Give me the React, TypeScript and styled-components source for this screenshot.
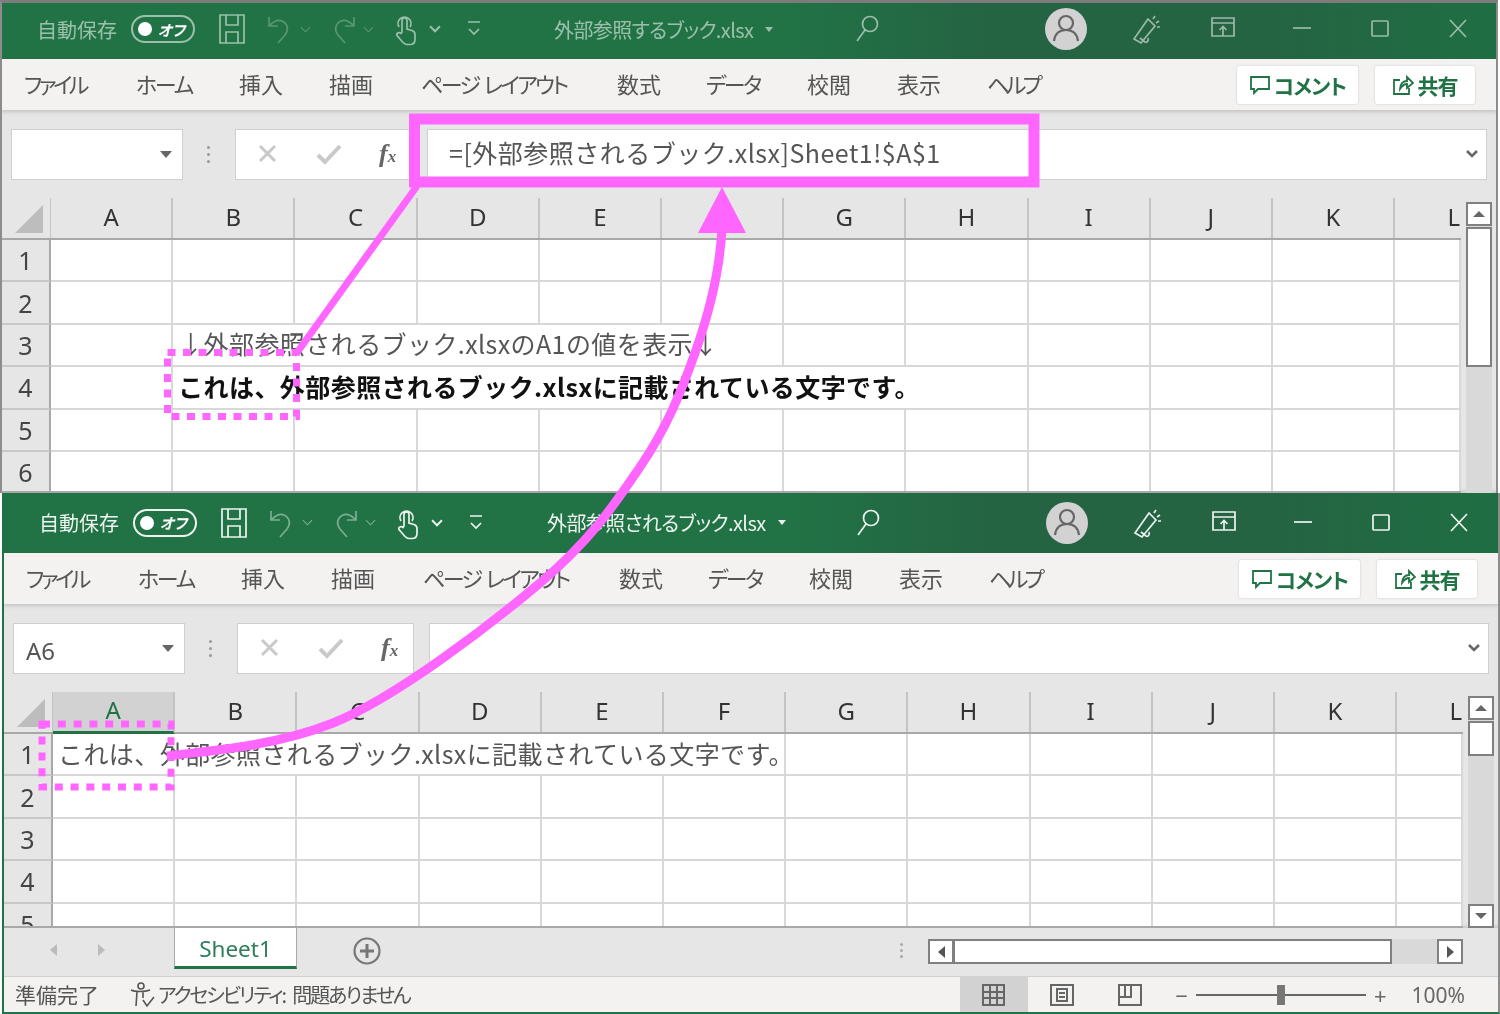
import React from 'react';
import styled, { createGlobalStyle } from 'styled-components';

const FONT = '"Noto Sans CJK JP", "Noto Sans", sans-serif';
const PINK = '#ff66ff';
const GREEN = '#217346';

const GlobalStyle = createGlobalStyle`
  html, body { margin: 0; padding: 0; background: #fff; overflow: hidden; }
  body { font-family: ${FONT}; font-feature-settings: "palt"; }
`;

const COLUMNS = ['A', 'B', 'C', 'D', 'E', 'F', 'G', 'H', 'I', 'J', 'K', 'L'];
const MENUS = [
  { label: 'ファイル', width: 64, gap: 0, tight: -3.6 },
  { label: 'ホーム', width: 57, gap: 48, tight: -2.3 },
  { label: '挿入', width: 44, gap: 46, tight: 0 },
  { label: '描画', width: 44, gap: 46, tight: 0 },
  { label: 'ページ レイアウト', width: 146, gap: 48, tight: -2.6 },
  { label: '数式', width: 44, gap: 50, tight: 0 },
  { label: 'データ', width: 55, gap: 45, tight: -2.6 },
  { label: '校閲', width: 44, gap: 46, tight: 0 },
  { label: '表示', width: 44, gap: 46, tight: 0 },
  { label: 'ヘルプ', width: 55, gap: 46, tight: -3.6 },
];

type CellData = { col: number; span: number; text: string; bold?: boolean };
type RowData = { label: number; height?: number; cell?: CellData };

const TitleIcon: React.FC<{ w: number; children: React.ReactNode; box?: string }> = ({ w, children, box }) => (
  <IconSvg width={w} height={34} viewBox={box || `0 0 ${w} 34`} fill="none" stroke="currentColor" strokeWidth={1.7}>
    {children}
  </IconSvg>
);

const Window: React.FC<{
  active?: boolean;
  title: string;
  titleGap: number;
  titleWidth: number;
  nameBox?: string;
  formula?: string;
  rows: RowData[];
  thumb: number;
  selected?: boolean;
  footer?: boolean;
}> = ({ active, title, titleGap, titleWidth, nameBox, formula, rows, thumb, selected, footer }) => (
  <WindowFrame $footer={footer}>
    <TitleBar $active={active}>
      <AutoSave>自動保存</AutoSave>
      <Toggle>
        <ToggleDot />
        <ToggleText>オフ</ToggleText>
      </Toggle>
      <Spot $ml={22}>
        <TitleIcon w={30}>
          <path d="M3 3h24v28H3zM9 3v10h12V3M9 31V20h12v11" />
        </TitleIcon>
      </Spot>
      <Spot $ml={19} $dim>
        <TitleIcon w={28}>
          <path d="M3 5v9h9M3 14c5-5 9-7 13-5 6 3 7 9 3 14l-7 8" />
        </TitleIcon>
      </Spot>
      <Spot $ml={6} $dim>
        <Chevron />
      </Spot>
      <Spot $ml={18} $dim>
        <TitleIcon w={28}>
          <path d="M25 5v9h-9M25 14c-5-5-9-7-13-5-6 3-7 9-3 14l7 8" />
        </TitleIcon>
      </Spot>
      <Spot $ml={6} $dim>
        <Chevron />
      </Spot>
      <Spot $ml={20}>
        <TitleIcon w={22}>
          <path d="M5 15a6.500 6.500 0 1 1 11 0M8 20V8.500a2.400 2.400 0 0 1 5 0V17l5 1.500c2 .6 3 2 3 4v5c0 3-2 5-5 5h-3c-2 0-3-1-4-2l-6-7c-1-2 2-4 4-2z" />
        </TitleIcon>
      </Spot>
      <Spot $ml={13}>
        <Chevron $strong />
      </Spot>
      <Spot $ml={25}>
        <TitleIcon w={16}>
          <path d="M2 10h12M3 17l5 5 5-5" />
        </TitleIcon>
      </Spot>
      <DocTitle $gap={titleGap} $width={titleWidth}>
        {title}
        <Caret />
      </DocTitle>
      <Spot $ml={69}>
        <TitleIcon w={26}>
          <circle cx={16} cy={12} r={7.500} />
          <path d="M11 18L3 29" />
        </TitleIcon>
      </Spot>
      <Avatar>
        <svg width={42} height={42} viewBox="0 0 42 42" fill="none" stroke="#666" strokeWidth={2.200}>
          <circle cx={21} cy={15} r={7} />
          <path d="M9 33c1-8 6-11 12-11s11 3 12 11" />
        </svg>
      </Avatar>
      <Spot $ml={44}>
        <TitleIcon w={30}>
          <path d="M3 27L17 7l7 7-14 17zM9 26l5 4c2 1 4-1 3-4M22 7l2-3M25 11l3-2M26 15h3" />
        </TitleIcon>
      </Spot>
      <Spot $ml={49}>
        <TitleIcon w={26}>
          <path d="M2 6h22v18H2zM2 11h22M13 24v-9M9.500 18l3.500-3.500 3.500 3.500" />
        </TitleIcon>
      </Spot>
      <Spot $ml={57}>
        <TitleIcon w={18}>
          <path d="M0 16h18" />
        </TitleIcon>
      </Spot>
      <Spot $ml={60}>
        <TitleIcon w={18}>
          <rect x={1} y={9} width={16} height={15} rx={1} />
        </TitleIcon>
      </Spot>
      <Spot $ml={60}>
        <TitleIcon w={18}>
          <path d="M1 8l16 17M17 8L1 25" />
        </TitleIcon>
      </Spot>
    </TitleBar>

    <MenuBar>
      <MenuList>
        {MENUS.map((m) => (
          <MenuItem key={m.label} $gap={m.gap} $width={m.width} $tight={m.tight}>
            {m.label}
          </MenuItem>
        ))}
      </MenuList>
      <RibbonButton $width={121}>
        <svg width={22} height={22} viewBox="0 0 22 22" fill="none" stroke={GREEN} strokeWidth={1.800}>
          <path d="M2 3h18v12H9l-4 4v-4H2z" />
        </svg>
        コメント
      </RibbonButton>
      <RibbonButton $width={100}>
        <svg width={22} height={22} viewBox="0 0 22 22" fill="none" stroke={GREEN} strokeWidth={1.800}>
          <path d="M8 6H2v14h15v-6M8 15c0-5 3-8 7-8V3l6 6-6 5v-4c-3 0-5 2-7 5z" />
        </svg>
        共有
      </RibbonButton>
    </MenuBar>

    <FormulaArea>
      <NameBox>
        <NameText>{nameBox}</NameText>
        <SmallCaret />
      </NameBox>
      <GripDots />
      <FxBox>
        <svg width={24} height={24} viewBox="0 0 24 24" fill="none" stroke="#c9c9c9" strokeWidth={3}>
          <path d="M4 4l15 15M19 4L4 19" />
        </svg>
        <svg width={28} height={24} viewBox="0 0 28 24" fill="none" stroke="#c9c9c9" strokeWidth={4}>
          <path d="M3 13l7 7L25 4" />
        </svg>
        <FxLabel>
          f<small>x</small>
        </FxLabel>
      </FxBox>
      <FormulaInput>
        <FormulaText>{formula}</FormulaText>
        <svg width={14} height={10} viewBox="0 0 14 10" fill="none" stroke="#666" strokeWidth={2.600}>
          <path d="M2 2l5 5 5-5" />
        </svg>
      </FormulaInput>
    </FormulaArea>

    <SheetArea>
      <GridColumn>
        <HeaderRow>
          <Corner>
            <svg width={30} height={29} viewBox="0 0 30 29">
              <path d="M29 1v28H1z" fill="#bdbdbd" />
            </svg>
          </Corner>
          {COLUMNS.map((c, i) => (
            <ColumnHeader key={c} $selected={selected && i === 0} $last={i === 11}>
              {c}
            </ColumnHeader>
          ))}
        </HeaderRow>
        <RowStack>
          {rows.map((row) => {
            const cell = row.cell;
            const items: React.ReactNode[] = [];
            for (let i = 0; i < 12; i++) {
              if (cell && i === cell.col) {
                items.push(
                  <Cell key={i} $span={cell.span} $bold={cell.bold}>
                    {cell.text}
                  </Cell>
                );
                i += cell.span - 1;
              } else {
                items.push(<Cell key={i} $span={1} />);
              }
            }
            return (
              <Row key={row.label}>
                <RowHeader>{row.label}</RowHeader>
                {items}
              </Row>
            );
          })}
        </RowStack>
      </GridColumn>
      <VScroll>
        <ScrollButton>
          <ArrowUp />
        </ScrollButton>
        <ScrollThumb $height={thumb} />
        {footer && (
          <VScrollEnd>
            <ScrollButton>
              <ArrowDown />
            </ScrollButton>
          </VScrollEnd>
        )}
      </VScroll>
    </SheetArea>

    {footer && (
      <>
        <TabBar>
          <TabNav>
            <NavArrow $dir="left" />
            <NavArrow $dir="right" />
          </TabNav>
          <SheetTab>Sheet1</SheetTab>
          <AddSheet>
            <svg width={28} height={28} viewBox="0 0 28 28" fill="none" stroke="#777" strokeWidth={2.200}>
              <circle cx={14} cy={14} r={12.500} />
              <path d="M14 7v14M7 14h14" strokeWidth={3} />
            </svg>
          </AddSheet>
          <TabGrip />
          <HScroll>
            <HScrollButton>
              <NavArrow $dir="left" $dark />
            </HScrollButton>
            <HThumb />
            <HTrack />
            <HScrollButton>
              <NavArrow $dir="right" $dark />
            </HScrollButton>
          </HScroll>
        </TabBar>
        <StatusBar>
          <StatusText>準備完了</StatusText>
          <AccessIcon>
            <svg width={26} height={26} viewBox="0 0 26 26" fill="none" stroke="#555" strokeWidth={1.600}>
              <circle cx={12} cy={4} r={3} />
              <path d="M2 8c4 2 14 2 19 0M8 10l-1 14M14 10l0 6M14 18l4 6 7-9" />
            </svg>
          </AccessIcon>
          <AccessText>アクセシビリティ: 問題ありません</AccessText>
          <StatusRight>
            <ViewButton $on>
              <svg width={28} height={24} viewBox="0 0 28 24" fill="none" stroke="#666" strokeWidth={2}>
                <path d="M3 2h21v20H3zM10 2v20M17 2v20M3 9h21M3 15h21" />
              </svg>
            </ViewButton>
            <ViewButton>
              <svg width={26} height={24} viewBox="0 0 26 24" fill="none" stroke="#666" strokeWidth={2}>
                <path d="M2 2h22v20H2zM8 6h10v12H8zM10 10h6M10 14h6" />
              </svg>
            </ViewButton>
            <ViewButton>
              <svg width={26} height={24} viewBox="0 0 26 24" fill="none" stroke="#666" strokeWidth={2}>
                <path d="M2 2h22v20H2zM2 14h12V2M8 2v12" />
              </svg>
            </ViewButton>
            <ZoomMark $left={11}>−</ZoomMark>
            <ZoomTrack>
              <ZoomHandle />
            </ZoomTrack>
            <ZoomMark $left={8}>+</ZoomMark>
            <ZoomValue>100%</ZoomValue>
          </StatusRight>
        </StatusBar>
      </>
    )}
  </WindowFrame>
);

export default function App() {
  return (
    <Stage>
      <GlobalStyle />
      <Window
        title="外部参照するブック.xlsx"
        titleGap={72}
        titleWidth={231}
        formula="=[外部参照されるブック.xlsx]Sheet1!$A$1"
        thumb={140}
        rows={[
          { label: 1 },
          { label: 2 },
          { label: 3, cell: { col: 1, span: 5, text: '↓外部参照されるブック.xlsxのA1の値を表示↓' } },
          { label: 4, cell: { col: 1, span: 7, text: 'これは、外部参照されるブック.xlsxに記載されている文字です。', bold: true } },
          { label: 5 },
          { label: 6 },
        ]}
      />
      <Window
        active
        selected
        footer
        title="外部参照されるブック.xlsx"
        titleGap={63}
        titleWidth={239}
        nameBox="A6"
        thumb={35}
        rows={[
          { label: 1, cell: { col: 0, span: 6, text: 'これは、外部参照されるブック.xlsxに記載されている文字です。' } },
          { label: 2 },
          { label: 3 },
          { label: 4 },
          { label: 5 },
        ]}
      />
      <Annotations viewBox="0 0 1500 1014" width={1500} height={1014} fill="none" stroke={PINK}>
        <rect x={414.500} y={119} width={619.500} height={63} strokeWidth={11} />
        <path d="M417 186L296 354" strokeWidth={7} />
        <rect x={167.500} y={352.500} width={129} height={64} strokeWidth={7} strokeDasharray="8 7.500" />
        <rect x={42} y={724} width={129} height={63} strokeWidth={7} strokeDasharray="8 7.800" />
        <path
          d="M167 756C195 752 271 748 333 723C395 698 489 626 540 583C591 540 614 505 640 467C666 429 681 392.500 695 353C709 313.500 720 270 722 228"
          strokeWidth={9}
        />
        <path d="M722 187L746 233H698Z" fill={PINK} stroke="none" />
      </Annotations>
    </Stage>
  );
}

const Stage = styled.div`
    position: relative;
    width: 1500px;
    height: 1014px;
    overflow: hidden;
    background: #fff;
    color: #444;
    filter: blur(0.45px);
  `,
  WindowFrame = styled.div<{ $footer?: boolean }>`
    display: flex;
    flex-direction: column;
    box-sizing: border-box;
    width: 1498px;
    height: ${(p) => (p.$footer ? 521 : 493)}px;
    margin-left: ${(p) => (p.$footer ? 2 : 0)}px;
    overflow: hidden;
    background: #e6e6e6;
    border-left: 2px solid ${(p) => (p.$footer ? GREEN : '#8c8c8c')};
    border-right: 2px solid #8c8c8c;
    border-top: ${(p) => (p.$footer ? 0 : 3)}px solid #7c7c7c;
    border-bottom: ${(p) => (p.$footer ? 2 : 0)}px solid ${GREEN};
  `,
  TitleBar = styled.div<{ $active?: boolean }>`
    display: flex;
    align-items: center;
    flex: none;
    box-sizing: border-box;
    height: ${(p) => (p.$active ? 60 : 56)}px;
    background: linear-gradient(90deg, ${GREEN} 0, ${GREEN} 52%, #246443 66%, #246443 85%, #1f6e43 100%);
    color: ${(p) => (p.$active ? 'rgba(255,255,255,0.92)' : 'rgba(255,255,255,0.55)')};
    padding: 0 0 ${(p) => (p.$active ? 1 : 4)}px 35px;
    font-size: 20px;
  `,
  AutoSave = styled.div`
    width: 81px;
    white-space: nowrap;
    font-size: 20px;
  `,
  Toggle = styled.div`
    display: flex;
    align-items: center;
    justify-content: space-between;
    box-sizing: border-box;
    width: 64px;
    height: 28px;
    margin-left: 13px;
    padding: 0 8px 0 5px;
    border: 2px solid currentColor;
    border-radius: 14px;
  `,
  ToggleDot = styled.span`
    width: 14px;
    height: 14px;
    border-radius: 50%;
    background: #fff;
  `,
  ToggleText = styled.span`
    font-size: 15px;
    font-style: italic;
    font-weight: 700;
    color: #fff;
  `,
  Spot = styled.div<{ $ml: number; $dim?: boolean }>`
    display: flex;
    flex: none;
    align-items: center;
    margin-left: ${(p) => p.$ml}px;
    opacity: ${(p) => (p.$dim ? 0.45 : 1)};
  `,
  IconSvg = styled.svg`
    display: block;
  `,
  Chevron = styled.span<{ $strong?: boolean }>`
    display: block;
    width: 6px;
    height: 6px;
    margin: 0 2px 4px;
    border-right: ${(p) => (p.$strong ? 2.5 : 1.7)}px solid currentColor;
    border-bottom: ${(p) => (p.$strong ? 2.5 : 1.7)}px solid currentColor;
    transform: rotate(45deg);
  `,
  DocTitle = styled.div<{ $gap: number; $width: number }>`
    display: flex;
    align-items: center;
    flex: none;
    box-sizing: border-box;
    width: ${(p) => p.$width}px;
    margin-left: ${(p) => p.$gap}px;
    font-size: 20px;
    letter-spacing: -0.6px;
    white-space: nowrap;
  `,
  Caret = styled.span`
    width: 0;
    height: 0;
    margin-left: 12px;
    border-left: 4.5px solid transparent;
    border-right: 4.5px solid transparent;
    border-top: 5px solid currentColor;
  `,
  Avatar = styled.div`
    display: flex;
    flex: none;
    align-items: center;
    justify-content: center;
    width: 42px;
    height: 42px;
    margin-left: 165px;
    border-radius: 50%;
    background: #d2d2d2;
  `,
  MenuBar = styled.div`
    display: flex;
    align-items: center;
    flex: none;
    box-sizing: border-box;
    height: 51px;
    padding: 0 21px 0 22px;
    background: #f3f2f1;
    box-shadow: 0 2px 3px rgba(0, 0, 0, 0.12);
    position: relative;
    gap: 17px;
  `,
  MenuList = styled.div`
    display: flex;
    align-items: center;
    flex: 1;
    padding-bottom: 3px;
  `,
  MenuItem = styled.div<{ $gap: number; $width: number; $tight: number }>`
    flex: none;
    width: ${(p) => p.$width}px;
    margin-left: ${(p) => p.$gap}px;
    font-size: 22px;
    letter-spacing: ${(p) => p.$tight}px;
    word-spacing: 3px;
    color: #555;
    white-space: nowrap;
  `,
  RibbonButton = styled.div<{ $width: number }>`
    display: flex;
    align-items: center;
    justify-content: center;
    gap: 3px;
    box-sizing: border-box;
    width: ${(p) => p.$width}px;
    height: 38px;
    background: #fff;
    border-radius: 2px;
    box-shadow: 0 0 2px rgba(0, 0, 0, 0.22);
    color: ${GREEN};
    font-size: 21px;
    font-weight: 700;
    letter-spacing: -0.9px;
  `,
  FormulaArea = styled.div`
    display: flex;
    align-items: center;
    flex: none;
    height: 88px;
    padding: 0 9px 0 9px;
    background: linear-gradient(#e2e2e2, #e6e6e6 8px);
  `,
  NameBox = styled.div`
    display: flex;
    align-items: center;
    justify-content: space-between;
    box-sizing: border-box;
    width: 172px;
    height: 51px;
    padding: 0 10px 0 12px;
    background: #fff;
    border: 1px solid #cfcfcf;
  `,
  NameText = styled.span`
    margin-top: 4px;
    font-family: "Noto Sans", sans-serif;
    font-size: 24px;
    color: #555;
  `,
  SmallCaret = styled.span`
    width: 0;
    height: 0;
    border-left: 6px solid transparent;
    border-right: 6px solid transparent;
    border-top: 7px solid #666;
  `,
  GripDots = styled.span`
    flex: none;
    width: 3px;
    height: 3px;
    margin: 0 25px 0 24px;
    border-radius: 50%;
    background: #999;
    box-shadow: 0 -7px 0 #999, 0 7px 0 #999;
  `,
  FxBox = styled.div`
    display: flex;
    align-items: center;
    box-sizing: border-box;
    flex: none;
    width: 177px;
    height: 51px;
    padding: 0 12px 0 20px;
    gap: 35px;
    justify-content: flex-start;
    background: #fff;
    border: 1px solid #cfcfcf;
    white-space: nowrap;
  `,
  FxLabel = styled.span`
    margin-left: 1px;
    font-family: "Liberation Serif", serif;
    font-style: italic;
    font-weight: 700;
    font-size: 26px;
    color: #666;
    small {
      font-size: 17px;
    }
  `,
  FormulaInput = styled.div`
    display: flex;
    align-items: center;
    justify-content: space-between;
    box-sizing: border-box;
    flex: 1;
    height: 51px;
    margin-left: 15px;
    padding: 0 7px 0 21px;
    background: #fff;
    border: 1px solid #cfcfcf;
  `,
  FormulaText = styled.span`
    font-size: 25px;
    font-feature-settings: normal;
    color: #555;
    white-space: nowrap;
    letter-spacing: 0.5px;
    margin-top: -4px;
  `,
  SheetArea = styled.div`
    display: flex;
    flex: 1;
    min-height: 0;
    overflow: hidden;
    position: relative;
    box-shadow: inset 0 -6px 5px -5px rgba(0, 0, 0, 0.18);
  `,
  GridColumn = styled.div`
    display: flex;
    flex-direction: column;
    flex: none;
    box-sizing: border-box;
    width: 1459px;
    overflow: hidden;
    border-bottom: 2px solid #a8a8a8;
  `,
  RowStack = styled.div`
    flex: 1;
    min-height: 0;
    overflow: hidden;
  `,
  HeaderRow = styled.div`
    display: grid;
    grid-template-columns: 49px repeat(11, 122.2px) 66px;
    flex: none;
    height: 42px;
    box-sizing: border-box;
    border-bottom: 2px solid #a8a8a8;
  `,
  Corner = styled.div`
    display: flex;
    justify-content: flex-end;
    align-items: flex-end;
    padding: 0 6px 5px 0;
    box-sizing: border-box;
    border-right: 1px solid #c4c4c4;
  `,
  ColumnHeader = styled.div<{ $selected?: boolean; $last?: boolean }>`
    display: flex;
    align-items: center;
    justify-content: ${(p) => (p.$last ? 'flex-end' : 'center')};
    box-sizing: border-box;
    padding-right: ${(p) => (p.$last ? 1 : 0)}px;
    padding-bottom: 4px;
    margin-bottom: ${(p) => (p.$selected ? -2 : 0)}px;
    background: ${(p) => (p.$selected ? '#d2d2d2' : 'transparent')};
    border-right: ${(p) => (p.$last ? 0 : 2)}px solid #c4c4c4;
    border-bottom: ${(p) => (p.$selected ? `3px solid ${GREEN}` : 0)};
    font-family: "Noto Sans", sans-serif;
    font-size: 24px;
    color: ${(p) => (p.$selected ? GREEN : '#333')};
  `,
  Row = styled.div`
    display: grid;
    grid-template-columns: 49px repeat(11, 122.2px) 66px;
    height: 42.4px;
    box-sizing: border-box;
  `,
  RowHeader = styled.div`
    display: flex;
    align-items: center;
    justify-content: center;
    padding-right: 0;
    box-sizing: border-box;
    background: #e6e6e6;
    border-right: 2px solid #a8a8a8;
    border-bottom: 2px solid #c8c8c8;
    font-family: "Noto Sans", sans-serif;
    font-size: 25px;
    color: #444;
  `,
  Cell = styled.div<{ $span: number; $bold?: boolean }>`
    display: flex;
    align-items: center;
    grid-column: span ${(p) => p.$span};
    box-sizing: border-box;
    min-width: 0;
    padding: 0 0 3px 5px;
    background: #fff;
    border-right: 2px solid #d8d8d8;
    border-bottom: 2px solid #d8d8d8;
    font-size: 25px;
    font-feature-settings: normal;
    letter-spacing: 0.42px;
    font-weight: ${(p) => (p.$bold ? 700 : 400)};
    color: ${(p) => (p.$bold ? '#111' : '#555')};
    white-space: nowrap;
  `,
  VScroll = styled.div`
    display: flex;
    flex-direction: column;
    flex: none;
    box-sizing: border-box;
    width: 26px;
    margin-left: 5px;
    margin-top: 4px;
    gap: 1px;
    background: #d9d9d9;
  `,
  ScrollButton = styled.div`
    display: flex;
    flex: none;
    align-items: center;
    justify-content: center;
    box-sizing: border-box;
    height: 24px;
    background: #fff;
    border: 2px solid #808080;
  `,
  ScrollThumb = styled.div<{ $height: number }>`
    flex: none;
    box-sizing: border-box;
    height: ${(p) => p.$height}px;
    background: #fff;
    border: 2px solid #808080;
  `,
  VScrollEnd = styled.div`
    margin-top: auto;
  `,
  ArrowUp = styled.span`
    width: 0;
    height: 0;
    border-left: 6px solid transparent;
    border-right: 6px solid transparent;
    border-bottom: 6px solid #666;
  `,
  ArrowDown = styled.span`
    width: 0;
    height: 0;
    border-left: 6px solid transparent;
    border-right: 6px solid transparent;
    border-top: 6px solid #666;
  `,
  TabBar = styled.div`
    display: flex;
    align-items: flex-start;
    flex: none;
    height: 49px;
    background: #e6e6e6;
    border-bottom: 1px solid #d0d0d0;
    box-sizing: border-box;
  `,
  TabNav = styled.div`
    display: flex;
    align-items: center;
    justify-content: center;
    gap: 41px;
    flex: none;
    box-sizing: border-box;
    width: 170px;
    height: 44px;
    padding-right: 24px;
    opacity: 0.45;
  `,
  NavArrow = styled.span<{ $dir: 'left' | 'right'; $dark?: boolean }>`
    width: 0;
    height: 0;
    border-top: 6px solid transparent;
    border-bottom: 6px solid transparent;
    border-${(p) => (p.$dir === 'left' ? 'right' : 'left')}: 7px solid ${(p) => (p.$dark ? '#555' : '#888')};
  `,
  SheetTab = styled.div`
    display: flex;
    align-items: center;
    justify-content: center;
    flex: none;
    box-sizing: border-box;
    width: 123px;
    height: 41px;
    padding-top: 3px;
    background: #fff;
    border-left: 1px solid #a8a8a8;
    border-right: 1px solid #a8a8a8;
    border-bottom: 3px solid ${GREEN};
    font-family: "Noto Sans", sans-serif;
    font-size: 22.5px;
    color: #2f7d5a;
  `,
  AddSheet = styled.div`
    display: flex;
    flex: none;
    align-items: center;
    margin: 9px 0 0 56px;
  `,
  TabGrip = styled.span`
    flex: none;
    width: 3px;
    height: 3px;
    margin: 21px 0 0 519px;
    border-radius: 50%;
    background: #aaa;
    box-shadow: 0 -6px 0 #aaa, 0 6px 0 #aaa;
  `,
  HScroll = styled.div`
    display: flex;
    flex: none;
    width: 535px;
    height: 25px;
    margin: 11px 0 0 25px;
    background: #d9d9d9;
  `,
  HScrollButton = styled.div`
    display: flex;
    flex: none;
    align-items: center;
    justify-content: center;
    box-sizing: border-box;
    width: 26px;
    height: 25px;
    background: #fff;
    border: 2px solid #808080;
  `,
  HThumb = styled.div`
    flex: none;
    box-sizing: border-box;
    width: 438px;
    background: #fff;
    border: 2px solid #808080;
    border-left-width: 1px;
  `,
  HTrack = styled.div`
    flex: 1;
  `,
  StatusBar = styled.div`
    display: flex;
    align-items: center;
    flex: none;
    height: 35px;
    padding-left: 11px;
    background: #f3f2f1;
    font-size: 21px;
    color: #555;
  `,
  StatusText = styled.div`
    flex: none;
    width: 81px;
    margin-top: -2px;
    white-space: nowrap;
  `,
  AccessIcon = styled.div`
    display: flex;
    flex: none;
    margin-left: 33px;
  `,
  AccessText = styled.div`
    margin-left: 3px;
    font-size: 20px;
    letter-spacing: -2.1px;
    word-spacing: 5px;
    white-space: nowrap;
  `,
  StatusRight = styled.div`
    display: flex;
    align-items: center;
    align-self: stretch;
    margin-left: auto;
    padding-right: 33px;
  `,
  ViewButton = styled.div<{ $on?: boolean }>`
    display: flex;
    align-items: center;
    justify-content: center;
    align-self: stretch;
    width: 68px;
    background: ${(p) => (p.$on ? '#d2d2d2' : 'transparent')};
  `,
  ZoomMark = styled.div<{ $left: number }>`
    font-size: 22px;
    font-family: "Noto Sans", sans-serif;
    color: #666;
    margin: 0 8px 0 ${(p) => p.$left}px;
  `,
  ZoomTrack = styled.div`
    position: relative;
    width: 170px;
    height: 2px;
    background: #666;
  `,
  ZoomHandle = styled.div`
    position: absolute;
    left: 81px;
    top: -9px;
    width: 8px;
    height: 20px;
    background: #777;
  `,
  ZoomValue = styled.div`
    margin-left: 17px;
    font-family: "Noto Sans", sans-serif;
    font-size: 21px;
    color: #666;
  `,
  Annotations = styled.svg`
    position: absolute;
    left: 0;
    top: 0;
    pointer-events: none;
  `;
